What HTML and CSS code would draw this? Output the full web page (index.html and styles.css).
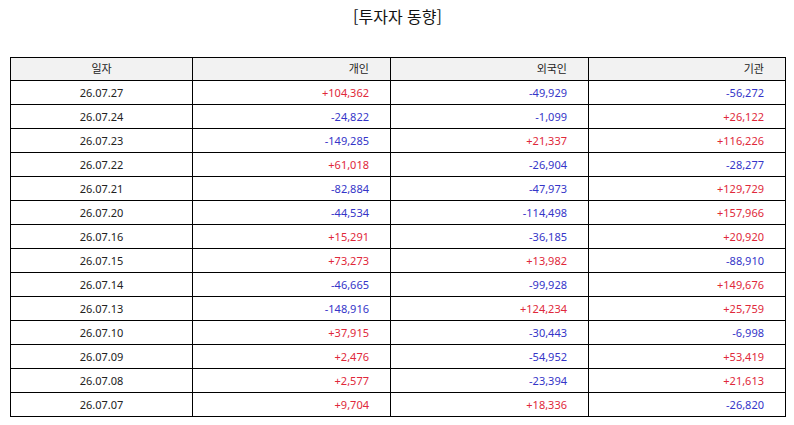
FILE: index.html
```html
<!DOCTYPE html>
<html lang="ko">
<head>
<meta charset="utf-8">
<title>투자자 동향</title>
<link rel="stylesheet" href="styles.css">
</head>
<body>
<div class="page">
  <h1 class="title">[투자자 동향]</h1>
  <table class="trend">
    <colgroup>
      <col class="c-date"><col class="c-num"><col class="c-num"><col class="c-num2">
    </colgroup>
    <thead>
      <tr><th class="date">일자</th><th>개인</th><th>외국인</th><th>기관</th></tr>
    </thead>
    <tbody>
      <tr><td class="date">26.07.27</td><td class="up">+104,362</td><td class="down">-49,929</td><td class="down">-56,272</td></tr>
      <tr><td class="date">26.07.24</td><td class="down">-24,822</td><td class="down">-1,099</td><td class="up">+26,122</td></tr>
      <tr><td class="date">26.07.23</td><td class="down">-149,285</td><td class="up">+21,337</td><td class="up">+116,226</td></tr>
      <tr><td class="date">26.07.22</td><td class="up">+61,018</td><td class="down">-26,904</td><td class="down">-28,277</td></tr>
      <tr><td class="date">26.07.21</td><td class="down">-82,884</td><td class="down">-47,973</td><td class="up">+129,729</td></tr>
      <tr><td class="date">26.07.20</td><td class="down">-44,534</td><td class="down">-114,498</td><td class="up">+157,966</td></tr>
      <tr><td class="date">26.07.16</td><td class="up">+15,291</td><td class="down">-36,185</td><td class="up">+20,920</td></tr>
      <tr><td class="date">26.07.15</td><td class="up">+73,273</td><td class="up">+13,982</td><td class="down">-88,910</td></tr>
      <tr><td class="date">26.07.14</td><td class="down">-46,665</td><td class="down">-99,928</td><td class="up">+149,676</td></tr>
      <tr><td class="date">26.07.13</td><td class="down">-148,916</td><td class="up">+124,234</td><td class="up">+25,759</td></tr>
      <tr><td class="date">26.07.10</td><td class="up">+37,915</td><td class="down">-30,443</td><td class="down">-6,998</td></tr>
      <tr><td class="date">26.07.09</td><td class="up">+2,476</td><td class="down">-54,952</td><td class="up">+53,419</td></tr>
      <tr><td class="date">26.07.08</td><td class="up">+2,577</td><td class="down">-23,394</td><td class="up">+21,613</td></tr>
      <tr><td class="date">26.07.07</td><td class="up">+9,704</td><td class="up">+18,336</td><td class="down">-26,820</td></tr>
    </tbody>
  </table>
</div>
</body>
</html>
```
FILE: styles.css
```css
html, body {
  margin: 0;
  padding: 0;
  background: #ffffff;
}
.page {
  padding: 4px 9px 0 10px;
  font-family: "Noto Sans", "Noto Sans CJK KR", sans-serif;
  color: #222222;
}
.title {
  margin: 0 0 29px 0;
  font-family: "Noto Sans CJK KR", sans-serif;
  font-size: 16px;
  font-weight: normal;
  line-height: 24px;
  text-align: center;
  color: #111111;
}
.trend {
  border-collapse: collapse;
  table-layout: fixed;
  width: 775px;
  font-size: 11px;
}
.c-date { width: 182px; }
.c-num { width: 198px; }
.c-num2 { width: 197px; }
.trend th,
.trend td {
  border: 1px solid #000000;
  height: 23px;
  padding: 0 21px 0 0;
  line-height: 23px;
  text-align: right;
  font-weight: normal;
  white-space: nowrap;
}
.trend th {
  height: 22px;
  line-height: 22px;
  background: #f2f2f2;
  color: #222222;
}
.trend .date {
  text-align: center;
  padding: 0;
  color: #222222;
}
.up { color: #e0283a; }
.down { color: #3535c8; }
```
